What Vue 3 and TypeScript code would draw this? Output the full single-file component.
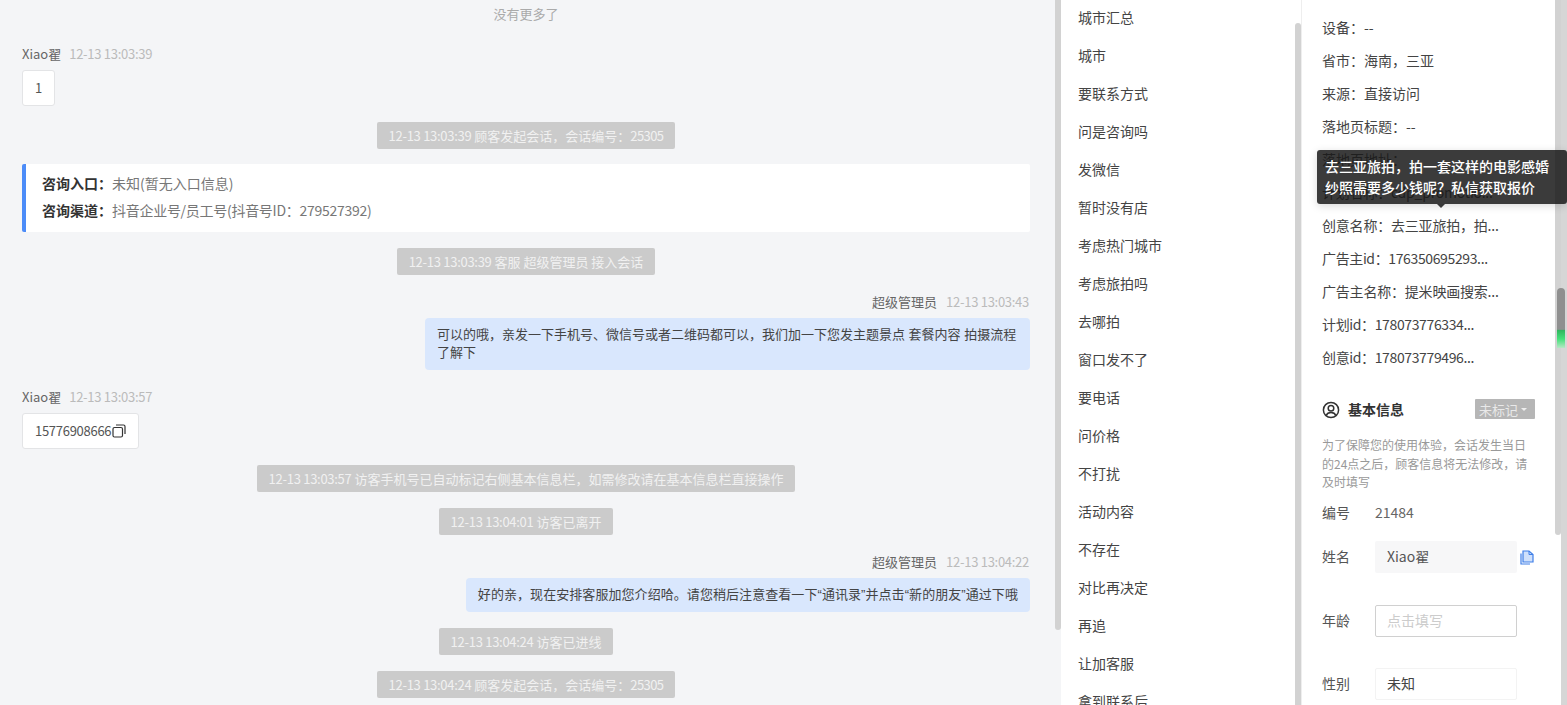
<template>
  <div class="page">
    <!-- 会话区 -->
    <div class="chat">
      <div class="no-more">没有更多了</div>
      <template v-for="(item, i) in messages" :key="i">
        <div v-if="item.type === 'system'" class="pill">
          <span class="num">{{ item.time }}</span> {{ item.text }}<span class="serial">{{ item.serial }}</span>
        </div>

        <div v-else-if="item.type === 'entry'" class="entry-card">
          <div class="entry-row"><b>咨询入口：</b><span>未知(暂无入口信息)</span></div>
          <div class="entry-row"><b>咨询渠道：</b><span class="num">抖音企业号/员工号(抖音号ID：279527392)</span></div>
        </div>

        <div v-else-if="item.type === 'visitor'" class="msg">
          <div class="msg-head">
            <span class="msg-name">{{ item.name }}</span>
            <span class="msg-time num">{{ item.time }}</span>
          </div>
          <div class="bubble num">
            {{ item.text }}
            <svg v-if="item.copy" class="copy-dark" viewBox="0 0 14 14" width="14" height="14">
              <rect x="1" y="3.500" width="9.500" height="9.500" rx="1.500" fill="none" stroke="#333" stroke-width="1.200" />
              <path d="M4 1h7.500A1.500 1.500 0 0 1 13 2.500V10" fill="none" stroke="#333" stroke-width="1.200" />
            </svg>
          </div>
        </div>

        <div v-else class="msg msg-self">
          <div class="msg-head">
            <span class="msg-name">{{ item.name }}</span>
            <span class="msg-time num">{{ item.time }}</span>
          </div>
          <div class="bubble bubble-self" :class="{ 'bubble-wide': item.wide }">{{ item.text }}</div>
        </div>
      </template>
    </div>
    <div class="bar"><div class="thumb thumb-chat"></div></div>

    <!-- 标签列表 -->
    <div class="tags">
      <div v-for="tag in tags" :key="tag" class="tag-row">{{ tag }}</div>
    </div>
    <div class="bar"><div class="thumb thumb-tags"></div></div>
    <div class="divider"></div>

    <!-- 顾客信息 -->
    <div class="info">
      <div
        v-for="row in sourceRows"
        :key="row"
        class="info-row"
        :class="{ tight: row.endsWith('...'), dense: /\d/.test(row) }"
      >
        {{ row }}
      </div>

      <div class="base-head">
        <svg class="user-icon" viewBox="0 0 18 18" width="18" height="18">
          <circle cx="9" cy="9" r="7.600" fill="none" stroke="#333" stroke-width="1.500" />
          <circle cx="9" cy="7.200" r="2.800" fill="none" stroke="#333" stroke-width="1.500" />
          <path d="M4.200 14.600C5 12.400 6.800 11.600 9 11.600s4 .8 4.800 3" fill="none" stroke="#333" stroke-width="1.500" />
        </svg>
        <span class="base-title">基本信息</span>
        <span class="mark">未标记<i class="caret"></i></span>
      </div>
      <p class="notice">为了保障您的使用体验，会话发生当日的24点之后，顾客信息将无法修改，请及时填写</p>

      <div class="field field-id">
        <label>编号</label>
        <span class="field-value">21484</span>
      </div>
      <div class="field">
        <label>姓名</label>
        <div class="box box-filled">Xiao翟</div>
        <svg class="copy-blue" viewBox="0 0 14 15" width="14" height="15">
          <path d="M3 1h6l4 3.500V12H3z" fill="#cfe0fb" stroke="#3f7fe8" stroke-width="1.200" />
          <path d="M1 3.500V14h9" fill="none" stroke="#3f7fe8" stroke-width="1.200" />
          <path d="M9 1v3.500h4" fill="none" stroke="#3f7fe8" stroke-width="1" />
        </svg>
      </div>
      <div class="field">
        <label>年龄</label>
        <div class="box box-input">点击填写</div>
      </div>
      <div class="field">
        <label>性别</label>
        <div class="box box-plain">未知</div>
      </div>
    </div>
    <div class="bar"><div class="thumb thumb-info"></div></div>
    <div class="track"></div>

    <!-- 浮层 -->
    <div class="tooltip">
      去三亚旅拍，拍一套这样的电影感婚纱照需要多少钱呢？私信获取报价
      <i class="tooltip-arrow"></i>
    </div>
    <div class="page-thumb"></div>
  </div>
</template>

<script setup lang="ts">
interface ChatItem {
  type: 'system' | 'entry' | 'visitor' | 'self'
  text?: string
  name?: string
  time?: string
  serial?: string
  copy?: boolean
  wide?: boolean
}

const messages: ChatItem[] = [
  { type: 'visitor', name: 'Xiao翟', time: '12-13 13:03:39', text: '1' },
  { type: 'system', time: '12-13 13:03:39', text: '顾客发起会话，会话编号：', serial: '25305' },
  { type: 'entry' },
  { type: 'system', time: '12-13 13:03:39', text: '客服 超级管理员 接入会话' },
  {
    type: 'self',
    name: '超级管理员',
    time: '12-13 13:03:43',
    text: '可以的哦，亲发一下手机号、微信号或者二维码都可以，我们加一下您发主题景点 套餐内容 拍摄流程了解下',
  },
  { type: 'visitor', name: 'Xiao翟', time: '12-13 13:03:57', text: '15776908666', copy: true },
  { type: 'system', time: '12-13 13:03:57', text: '访客手机号已自动标记右侧基本信息栏，如需修改请在基本信息栏直接操作' },
  { type: 'system', time: '12-13 13:04:01', text: '访客已离开' },
  {
    type: 'self',
    name: '超级管理员',
    time: '12-13 13:04:22',
    text: '好的亲，现在安排客服加您介绍哈。请您稍后注意查看一下“通讯录”并点击“新的朋友”通过下哦',
    wide: true,
  },
  { type: 'system', time: '12-13 13:04:24', text: '访客已进线' },
  { type: 'system', time: '12-13 13:04:24', text: '顾客发起会话，会话编号：', serial: '25305' },
]

const tags = [
  '城市汇总', '城市', '要联系方式', '问是咨询吗', '发微信', '暂时没有店', '考虑热门城市', '考虑旅拍吗', '去哪拍',
  '窗口发不了', '要电话', '问价格', '不打扰', '活动内容', '不存在', '对比再决定', '再追', '让加客服', '拿到联系后',
]

const sourceRows = [
  '设备：--',
  '省市：海南，三亚',
  '来源：直接访问',
  '落地页标题：--',
  '落地页地址：',
  '计划名称：cdp_promotio...',
  '创意名称：去三亚旅拍，拍...',
  '广告主id：176350695293...',
  '广告主名称：提米映画搜索...',
  '计划id：178073776334...',
  '创意id：178073779496...',
]
</script>

<style scoped>
.page {
  position: relative;
  display: flex;
  height: 705px;
  overflow: hidden;
  background-color: #f4f5f7;
  font-family: "Noto Sans CJK SC", "Noto Sans", sans-serif;
  font-size: 13px;
  color: #444;
}

.chat {
  flex: 0 0 1055px;
  box-sizing: border-box;
  display: flex;
  flex-direction: column;
  gap: 16px;
  padding: 3px 25px 0 22px;
}

.no-more {
  height: 22px;
  line-height: 22px;
  margin-bottom: 2px;
  text-align: center;
  color: #aaa;
}

/* 数字比正文窄一点 */
.num {
  letter-spacing: -0.28px;
}

.serial {
  letter-spacing: -0.6px;
}

.pill {
  flex: none;
  align-self: center;
  height: 27px;
  line-height: 27px;
  padding: 0 12px;
  border-radius: 2px;
  background-color: #cbcbcb;
  color: #f1f1f1;
  white-space: nowrap;
}

.entry-card {
  flex: none;
  box-sizing: border-box;
  height: 68px;
  margin-top: -1px;
  padding: 6px 16px;
  background-color: #fff;
  border-left: 4px solid #4c8cf8;
  border-radius: 2px;
  font-size: 14px;
}

.entry-row {
  height: 27px;
  line-height: 27px;
  color: #777;
}

.entry-row b {
  color: #333;
  font-weight: 700;
}

.msg {
  flex: none;
  display: flex;
  flex-direction: column;
  align-items: flex-start;
}

.msg-self {
  align-items: flex-end;
}

.msg-head {
  height: 22px;
  line-height: 22px;
  margin-bottom: 5px;
}

.msg-self .msg-head {
  padding-right: 1px;
}

.msg-name {
  color: #666;
}

.msg-time {
  margin-left: 8px;
  color: #bbb;
}

.msg-self .msg-time {
  margin-left: 9px;
}

.bubble {
  display: flex;
  align-items: center;
  box-sizing: border-box;
  min-height: 36px;
  padding: 8px 12px;
  line-height: 18px;
  background-color: #fff;
  border: 1px solid #e3e4e6;
  border-radius: 3px;
  color: #555;
}

.bubble-self {
  display: block;
  max-width: 605px;
  min-height: 34px;
  background-color: #d9e7fd;
  border: none;
  border-radius: 4px;
  /* 引号要窄的西文字形 */
  font-family: "Liberation Sans", "Noto Sans CJK SC", sans-serif;
  color: #444;
}

.bubble-wide {
  letter-spacing: 0.065px;
}

.copy-dark {
  flex: none;
  margin-left: 1px;
}

.bar {
  flex: 0 0 6px;
  background-color: #fff;
}

.chat + .bar {
  background-color: transparent;
}

.thumb {
  background-color: #d2d2d2;
  border-radius: 0 0 3px 3px;
}

.thumb-chat {
  height: 630px;
}

.thumb-tags {
  height: 682px;
  margin-top: 23px;
  border-radius: 3px 3px 0 0;
}

.thumb-info {
  height: 535px;
}

.tags {
  flex: 0 0 234px;
  box-sizing: border-box;
  padding-left: 17px;
  background-color: #fff;
  overflow: hidden;
}

.tag-row {
  height: 38px;
  line-height: 38px;
  position: relative;
  top: -2px;
  font-size: 14px;
  color: #444;
}

.divider {
  flex: 0 0 1px;
  background-color: #eee;
}

.info {
  flex: 0 0 253px;
  box-sizing: border-box;
  padding: 11px 20px 0;
  background-color: #fff;
  font-size: 14px;
  overflow: hidden;
}

.info-row {
  height: 33px;
  line-height: 33px;
  white-space: nowrap;
  color: #444;
}

.info-row.tight {
  letter-spacing: -0.2px;
}

.info-row.dense {
  letter-spacing: -0.37px;
}

.base-head {
  display: flex;
  align-items: center;
  height: 20px;
  margin-top: 25px;
}

.user-icon {
  flex: none;
  margin: 1px 8px 0 0;
}

.base-title {
  font-weight: 700;
  color: #333;
}

.mark {
  display: flex;
  align-items: center;
  height: 20px;
  margin-left: auto;
  padding: 0 8px 0 4px;
  background-color: #b6b6b6;
  color: #e9e9e9;
  font-size: 13px;
  border-radius: 1px;
}

.caret {
  margin: 1px 0 0 3px;
  border: 3.500px solid transparent;
  border-top-color: #eee;
  border-bottom: none;
}

.notice {
  margin: 17px -2px 0 0;
  font-size: 12px;
  line-height: 18.500px;
  color: #999;
}

.field {
  display: flex;
  align-items: center;
  height: 32px;
  margin-bottom: 31.500px;
  color: #555;
}

.field-id {
  height: 20px;
  margin: 11.500px 0 18px;
}

.field label {
  flex: 0 0 53px;
  margin-top: -2px;
}

.field-value {
  margin-top: -2px;
  color: #666;
}

.box {
  box-sizing: border-box;
  flex: 0 0 142px;
  height: 32px;
  line-height: 29px;
  padding: 0 11px;
  border: 1px solid transparent;
  border-radius: 2px;
}

.box-filled {
  background-color: #f7f7f8;
}

.box-input {
  border-color: #d0d0d0;
  color: #ccc;
}

.box-plain {
  border-color: #f3f3f3;
  color: #444;
}

.copy-blue {
  flex: none;
  margin-left: 3px;
}

.track {
  flex: 0 0 6px;
  background-color: #d6d6d6;
}

.tooltip {
  position: absolute;
  top: 150px;
  left: 1317px;
  box-sizing: border-box;
  width: 250px;
  height: 54px;
  padding: 6px 8px;
  background-color: rgba(25, 25, 25, 0.85);
  border-radius: 3px;
  box-shadow: 0 2px 8px rgba(0, 0, 0, 0.15);
  font-size: 14px;
  font-weight: 500;
  line-height: 21px;
  color: #fff;
}

.tooltip-arrow {
  position: absolute;
  bottom: -4px;
  left: 120px;
  border: 4px solid transparent;
  border-top-color: rgba(25, 25, 25, 0.85);
  border-bottom: none;
}

.page-thumb {
  position: absolute;
  top: 288px;
  left: 1557px;
  width: 8px;
  height: 60px;
  border-radius: 4px 4px 0 0;
  background: linear-gradient(#8f8f8f 0, #8f8f8f 69%, #2fb45e 70%, #45e07a 85%, #b5e8c5 100%);
}
</style>

<style>
html,
body {
  margin: 0;
  overflow: hidden;
}
</style>
